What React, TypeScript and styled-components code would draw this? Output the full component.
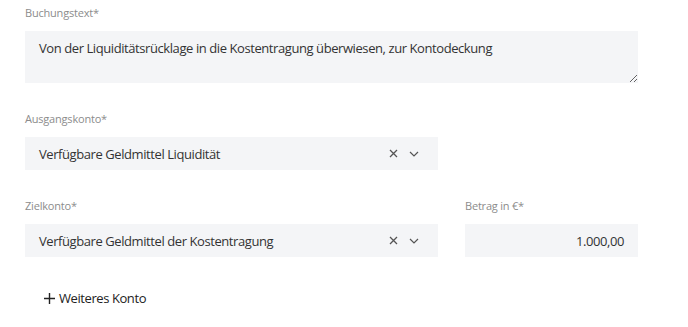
import { createGlobalStyle, styled } from "styled-components";

const GlobalStyle = createGlobalStyle`
  body {
    margin: 0;
    background: #ffffff;
    font-family: "Open Sans", "Noto Sans", sans-serif;
  }
`;

const Form = styled.div`
    width: 613px;
    padding: 5px 0 0 25px;
    display: flex;
    flex-direction: column;
    gap: 28px;
`;

const Row = styled.div`
    display: grid;
    grid-template-columns: 413px 173px;
    column-gap: 27px;
`;

const Field = styled.div`
    display: flex;
    flex-direction: column;
    gap: 10px;
`;

const Label = styled.label`
    font-size: 11px;
    line-height: 16px;
    letter-spacing: -0.2px;
    color: #8c8c8c;
`;

const TextArea = styled.textarea`
    box-sizing: border-box;
    width: 613px;
    height: 52px;
    padding: 8px 14px;
    border: none;
    outline: none;
    background: #f4f5f7;
    font-family: inherit;
    font-size: 13px;
    line-height: 18px;
    letter-spacing: -0.42px;
    color: #333;
    resize: vertical;
`;

const Select = styled.div`
    box-sizing: border-box;
    height: 33px;
    padding: 0 14px;
    background: #f4f5f7;
    display: flex;
    align-items: center;
    font-size: 13px;
    letter-spacing: -0.42px;
    color: #333;
`;

const SelectValue = styled.span`
    flex: 1;
`;

const Icons = styled.div`
    display: flex;
    align-items: center;
    gap: 11px;
    color: #555;
    margin-right: 5px;
`;

const Amount = styled(Select)`
    justify-content: flex-end;
`;

const AddButton = styled.button`
    align-self: flex-start;
    margin: 4px 0 0 19px;
    padding: 0;
    border: none;
    background: none;
    display: flex;
    align-items: center;
    gap: 4px;
    font-family: inherit;
    font-size: 13px;
    letter-spacing: -0.42px;
    color: #222;
    cursor: pointer;
`;

function Clear() {
    return (
        <svg width="9" height="9" viewBox="0 0 9 9" fill="none" stroke="currentColor" strokeWidth="1.3">
            <path d="M1 1 L8 8 M8 1 L1 8" />
        </svg>
    );
}

function Chevron() {
    return (
        <svg width="10" height="6" viewBox="0 0 10 6" fill="none" stroke="currentColor" strokeWidth="1.2">
            <path d="M1 1 L5 5 L9 1" />
        </svg>
    );
}

function AccountSelect({ value }: { value: string }) {
    return (
        <Select>
            <SelectValue>{value}</SelectValue>
            <Icons>
                <Clear />
                <Chevron />
            </Icons>
        </Select>
    );
}

export default function App() {
    return (
        <>
            <GlobalStyle />
            <Form>
                <Field>
                    <Label>Buchungstext*</Label>
                    <TextArea
                        readOnly
                        value="Von der Liquiditätsrücklage in die Kostentragung überwiesen, zur Kontodeckung"
                    />
                </Field>

                <Row>
                    <Field>
                        <Label>Ausgangskonto*</Label>
                        <AccountSelect value="Verfügbare Geldmittel Liquidität" />
                    </Field>
                </Row>

                <Row>
                    <Field>
                        <Label>Zielkonto*</Label>
                        <AccountSelect value="Verfügbare Geldmittel der Kostentragung" />
                    </Field>
                    <Field>
                        <Label>Betrag in €*</Label>
                        <Amount>1.000,00</Amount>
                    </Field>
                </Row>

                <AddButton>
                    <svg width="11" height="11" viewBox="0 0 11 11" stroke="currentColor" strokeWidth="1.4">
                        <path d="M5.5 0 V11 M0 5.5 H11" />
                    </svg>
                    Weiteres Konto
                </AddButton>
            </Form>
        </>
    );
}
